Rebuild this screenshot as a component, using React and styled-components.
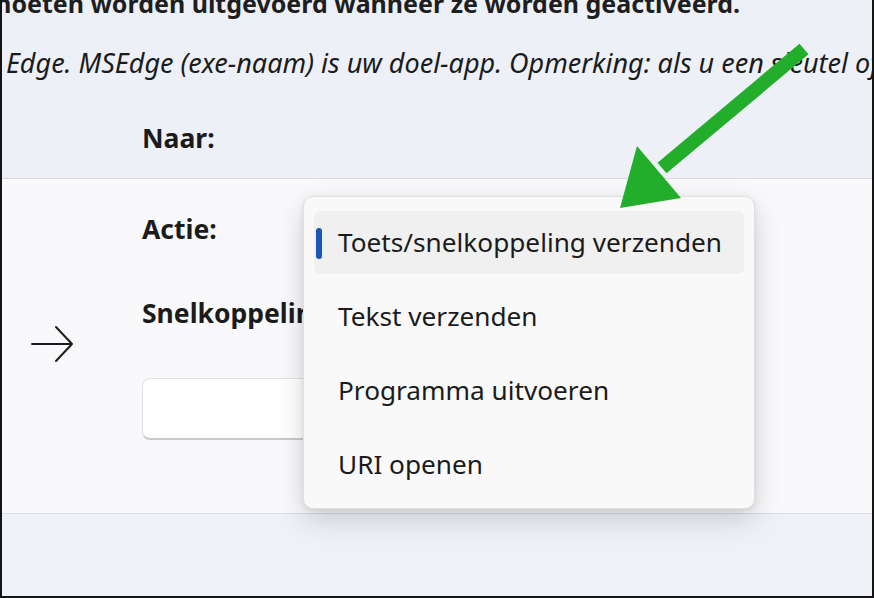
import React from "react";
import styled, { createGlobalStyle } from "styled-components";

const GlobalStyle = createGlobalStyle`
  html, body {
    margin: 0;
    padding: 0;
    background: #ffffff;
  }
  * {
    box-sizing: border-box;
  }
`;

const font = `"Noto Sans", "Open Sans", "Liberation Sans", sans-serif`;

const Frame = styled.div`
  position: relative;
  width: 874px;
  height: 598px;
  overflow: hidden;
  display: flex;
  flex-direction: column;
  border-left: 2px solid #141414;
  border-right: 2px solid #141414;
  border-bottom: 2px solid #141414;
  font-family: ${font};
  color: #1b1b1b;
`;

const TopBand = styled.section`
  height: 179px;
  flex: none;
  background: #edf0f7;
  border-bottom: 1px solid #d9dbe1;
  overflow: hidden;
`;

const Heading = styled.p`
  margin: -14px 0 0 -15px;
  font-size: 25px;
  font-weight: 700;
  line-height: 34px;
  white-space: nowrap;
  color: #1e1e1e;
`;

const Note = styled.p`
  margin: 25px 0 0 -12px;
  font-size: 27px;
  font-style: italic;
  line-height: 36px;
  white-space: nowrap;
  color: #1b1b1b;
`;

const Label = styled.div`
  font-size: 26.5px;
  font-weight: 700;
  line-height: 34px;
  white-space: nowrap;
  color: #1b1b1b;
`;

const TopLabel = styled(Label)`
  margin: 40px 0 0 140px;
`;

const Panel = styled.section`
  height: 335px;
  flex: none;
  background: #f9f9fb;
  border-bottom: 1px solid #dcdde2;
  display: grid;
  grid-template-columns: 140px 1fr;
  overflow: hidden;
`;

const ArrowCell = styled.div`
  display: flex;
  align-items: center;
  padding: 0 0 4px 28px;
  height: 100%;
`;

const FormColumn = styled.div`
  display: flex;
  flex-direction: column;
  padding-top: 33px;
`;

const FieldLabel = styled(Label)`
  margin-bottom: ${(p) => p.$gap}px;
`;

const Input = styled.div`
  width: 360px;
  height: 62px;
  background: #ffffff;
  border: 1px solid #e1e1e4;
  border-bottom: 2px solid #c9c9cc;
  border-radius: 8px;
`;

const BottomBand = styled.section`
  flex: 1;
  background: #eef1f8;
`;

const Menu = styled.ul`
  position: absolute;
  left: 301px;
  top: 196px;
  width: 452px;
  height: 313px;
  margin: 0;
  padding: 14px 10px;
  list-style: none;
  display: flex;
  flex-direction: column;
  gap: 11px;
  background: #f9f9f9;
  border: 1px solid #e0e0e2;
  border-radius: 10px;
  box-shadow: 0 10px 28px rgba(0, 0, 0, 0.16), 0 2px 6px rgba(0, 0, 0, 0.08);
`;

const Item = styled.li`
  position: relative;
  height: 63px;
  flex: none;
  display: flex;
  align-items: center;
  padding: 0 0 2px 24px;
  border-radius: 6px;
  font-size: 26.2px;
  white-space: nowrap;
  color: #1b1b1b;
  background: ${(p) => (p.$selected ? "#f0f0f1" : "transparent")};

  &::before {
    content: "";
    display: ${(p) => (p.$selected ? "block" : "none")};
    position: absolute;
    left: 2px;
    top: 17px;
    width: 6px;
    height: 31px;
    border-radius: 3px;
    background: #1a56b4;
  }
`;

const Overlay = styled.svg`
  position: absolute;
  left: -2px;
  top: 0;
  pointer-events: none;
`;

const items = [
  "Toets/snelkoppeling verzenden",
  "Tekst verzenden",
  "Programma uitvoeren",
  "URI openen",
];

const RightArrow = () => (
  <svg width="44" height="40" viewBox="0 0 44 40" fill="none">
    <path
      d="M2 20 H42 M26 3 L42 20 L26 37"
      stroke="#1b1b1b"
      strokeWidth="2"
      strokeLinecap="round"
      strokeLinejoin="round"
    />
  </svg>
);

export default function App() {
  return (
    <>
      <GlobalStyle />
      <Frame>
        <TopBand>
          <Heading>moeten worden uitgevoerd wanneer ze worden geactiveerd.</Heading>
          <Note>
            t Edge. MSEdge (exe-naam) is uw doel-app. Opmerking: als u een sleutel of
          </Note>
          <TopLabel>Naar:</TopLabel>
        </TopBand>
        <Panel>
          <ArrowCell>
            <RightArrow />
          </ArrowCell>
          <FormColumn>
            <FieldLabel $gap={50}>Actie:</FieldLabel>
            <FieldLabel $gap={48}>Snelkoppeling:</FieldLabel>
            <Input />
          </FormColumn>
        </Panel>
        <BottomBand />
        <Menu>
          {items.map((t, i) => (
            <Item key={t} $selected={i === 0}>
              {t}
            </Item>
          ))}
        </Menu>
        <Overlay width="874" height="598" viewBox="0 0 874 598">
          <line
            x1="804"
            y1="49"
            x2="662"
            y2="168"
            stroke="#22ae2a"
            strokeWidth="14"
          />
          <polygon points="637,146 681,198 620,208" fill="#22ae2a" />
        </Overlay>
      </Frame>
    </>
  );
}
